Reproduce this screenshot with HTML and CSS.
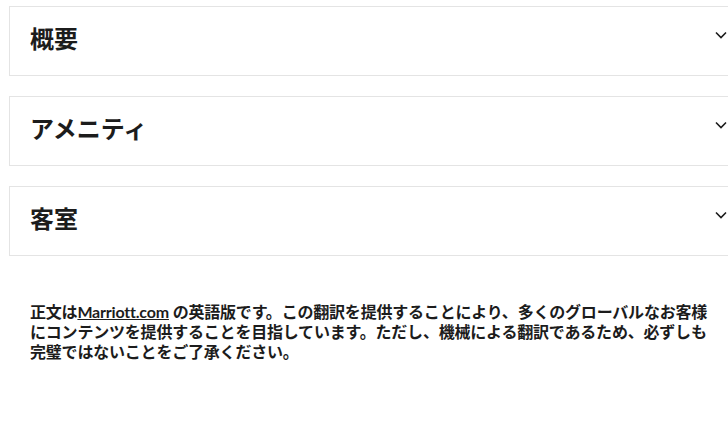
FILE: index.html
```html
<!DOCTYPE html>
<html lang="ja">

<head>
    <meta charset="UTF-8">
    <meta name="viewport" content="width=device-width, initial-scale=1.0">
    <title>ホテル情報</title>
    <link rel="stylesheet" href="styles.css">
</head>

<body>
    <div class="page">
        <div class="accordion">
            <div class="panel">
                <h3 class="panel-title">概要</h3>
                <svg class="chevron" width="12" height="8" viewBox="0 0 12 8"><polyline points="1,1.5 6,6.5 11,1.5" /></svg>
            </div>
            <div class="panel">
                <h3 class="panel-title">アメニティ</h3>
                <svg class="chevron" width="12" height="8" viewBox="0 0 12 8"><polyline points="1,1.5 6,6.5 11,1.5" /></svg>
            </div>
            <div class="panel">
                <h3 class="panel-title">客室</h3>
                <svg class="chevron" width="12" height="8" viewBox="0 0 12 8"><polyline points="1,1.5 6,6.5 11,1.5" /></svg>
            </div>
        </div>

        <p class="notice">正文は<a href="#">Marriott.com</a> の英語版です。この翻訳を提供することにより、多くのグローバルなお客様<br>にコンテンツを提供することを目指しています。ただし、機械による翻訳であるため、必ずしも<br>完璧ではないことをご了承ください。</p>
    </div>
</body>

</html>
```

FILE: styles.css
```css
html,
body {
    margin: 0;
    padding: 0;
    overflow: hidden;
    background: #fff;
}

body {
    font-family: Lato, "Noto Sans CJK JP", sans-serif;
    color: #1c1c1c;
}

.page {
    width: 740px;
    padding: 6px 0 0 9px;
}

.accordion {
    display: flex;
    flex-direction: column;
    gap: 20px;
}

.panel {
    display: flex;
    justify-content: space-between;
    align-items: flex-start;
    height: 68px;
    border: 1px solid #e4e4e4;
    padding: 0 20px 0 20px;
    box-sizing: content-box;
}

.panel-title {
    margin: 0;
    padding-top: 18px;
    font-size: 24px;
    line-height: 28px;
    font-weight: 700;
}

.chevron {
    margin-top: 24px;
    margin-right: 1px;
    fill: none;
    stroke: #1c1c1c;
    stroke-width: 1.6;
}

.notice {
    width: 700px;
    margin: 46px 0 0 21px;
    font-size: 16px;
    line-height: 20px;
    font-weight: 700;
    letter-spacing: -0.2px;
    white-space: nowrap;
}

.notice a {
    color: inherit;
    text-decoration: underline;
}
```
